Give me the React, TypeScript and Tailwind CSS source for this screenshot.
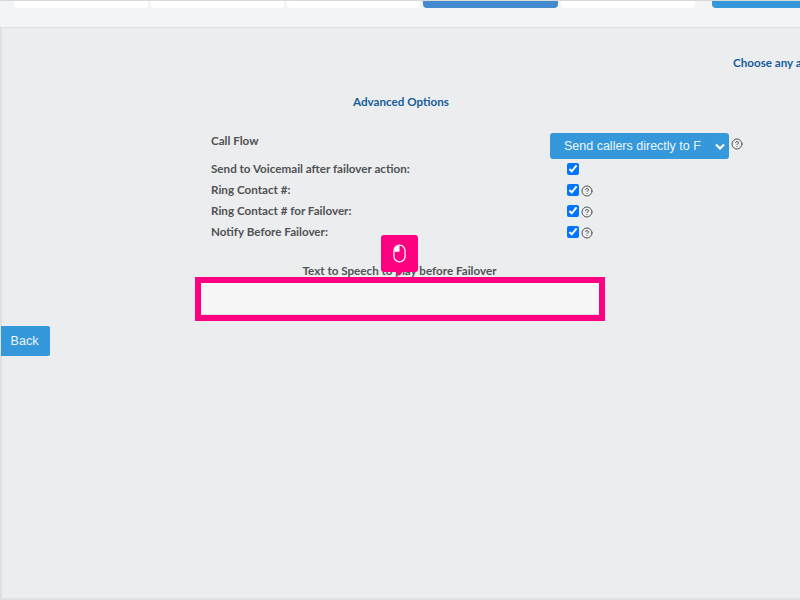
import React from 'react';
import { CircleHelp } from 'lucide-react';

const tabs = [
  { width: 'w-[134px]', active: false },
  { width: 'w-[133px]', active: false },
  { width: 'w-[133px]', active: false },
  { width: 'w-[135px]', active: true },
  { width: 'w-[134px]', active: false },
];

const rows = [
  { label: 'Send to Voicemail after failover action:', help: false },
  { label: 'Ring Contact #:', help: true },
  { label: 'Ring Contact # for Failover:', help: true },
  { label: 'Notify Before Failover:', help: true },
];

const MouseIcon: React.FC = () => (
  <svg width="13" height="19" viewBox="0 0 14 20" fill="none">
    <rect x="1" y="1" width="12" height="18" rx="6" stroke="white" strokeWidth="1.4" />
    <path d="M7 1.5C3.9 1.5 1.6 3.8 1.6 7V8H7Z" fill="white" />
  </svg>
);

const App: React.FC = () => (
  <div className="relative flex h-[600px] w-[800px] flex-col overflow-hidden bg-[#ecedef] font-['Lato',sans-serif]">
    {/* tab strip */}
    <div className="h-[28px] shrink-0 border-y border-t-[#d9d9d9] border-b-[#dfe0e2] bg-[#f3f4f6] pl-[14px]">
      <div className="flex gap-[3px]">
        {tabs.map((tab, index) => (
          <div
            key={index}
            className={`h-[7px] shrink-0 rounded-b-[4px] ${tab.width} ${tab.active ? 'bg-[#4289cd]' : 'bg-white'}`}
          />
        ))}
        <div className="ml-[14px] h-[7px] w-[100px] shrink-0 rounded-bl-[4px] bg-[#3498db]" />
      </div>
    </div>

    <div className="flex-1 border-b-2 border-l-2 border-b-[#dfe0e2] border-l-[#dfe0e2]">
      <div className="whitespace-nowrap pl-[731px] pt-[27px] text-[11.65px] leading-[16px] font-bold text-[#155d99]">
        Choose any a
      </div>
      <div className="mt-[23px] text-center text-[11.65px] leading-[16px] font-bold text-[#155d99]">
        Advanced Options
      </div>

      <div className="pl-[209px] pt-[23px] text-[11.65px] font-bold text-[#505254]">
        <div className="flex h-[25px]">
          <div className="w-[339px] leading-[16px]">Call Flow</div>
          <button className="flex h-[26px] w-[179px] shrink-0 items-center justify-between rounded-[3px] bg-[#3498db] pl-[14px] pr-[4px] font-['Liberation_Sans',sans-serif] text-[12.5px] font-normal whitespace-nowrap text-[#eef6fc]">
            <span>Send callers directly to F</span>
            <svg width="10" height="7" viewBox="0 0 10 7" fill="none">
              <path d="M1 1.5L5 5.5L9 1.5" stroke="white" strokeWidth="2.2" />
            </svg>
          </button>
          <CircleHelp className="ml-[2px] mt-[5px] text-[#555]" size={12} />
        </div>
        {rows.map((row) => (
          <div key={row.label} className="flex h-[21px] items-center">
            <div className="w-[356px] leading-[16px]">{row.label}</div>
            <input type="checkbox" checked readOnly className="m-0 h-3 w-3" />
            {row.help && <CircleHelp className="ml-[2px] mt-[2px] text-[#555]" size={12} />}
          </div>
        ))}
      </div>

      <div className="mt-[21px] pr-[3px] text-center text-[11.65px] leading-[16px] font-bold text-[#505254]">
        Text to Speech to play before Failover
      </div>
      <div className="relative ml-[193px] -mt-[2px] h-[44px] w-[410px] border-[6px] border-[#ff0080] bg-[#f6f6f6]">
        <div className="h-full border-b border-[#dddddd]" />
      </div>
      <button className="-ml-[1px] mt-[5px] h-[30px] w-[49px] rounded-r-[2px] bg-[#3498db] pr-[2px] font-['Liberation_Sans',sans-serif] text-[12.5px] text-[#eef6fc]">
        Back
      </button>
    </div>

    {/* click marker over the field */}
    <div className="absolute left-[381px] top-[235px] flex h-[37px] w-[37px] items-center justify-center rounded-[3px] bg-[#ff0080]">
      <MouseIcon />
      <div className="absolute -bottom-[4px] left-[14px] h-0 w-0 border-x-[4px] border-t-[5px] border-x-transparent border-t-[#ff0080]" />
    </div>
  </div>
);

export default App;
